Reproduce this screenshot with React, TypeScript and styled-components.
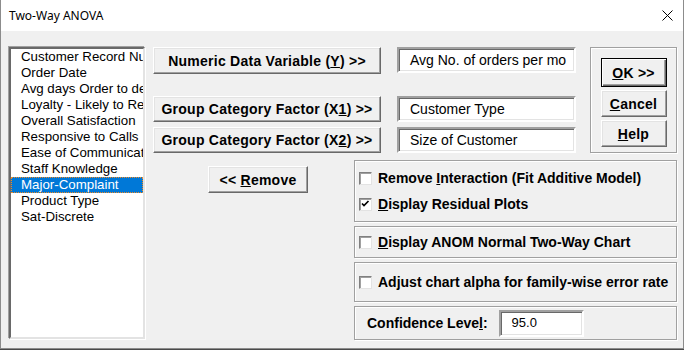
import React from "react";
import styled, {createGlobalStyle} from "styled-components";

//=============== GLOBAL ==================
const GlobalStyle = createGlobalStyle`
  html, body {
    margin: 0;
    padding: 0;
    background: #4a4a4a;
  }
  body {
    width: 684px;
    height: 350px;
    overflow: hidden;
    font-family: "Liberation Sans", Arial, sans-serif;
  }
  * { box-sizing: border-box; }
`;

//=============== STYLED ==================
const Window = styled.div`
  width: 684px;
  height: 349px;
  background: #f0f0f0;
  border: 1px solid #8c8c8c;
  border-top: none;
  display: flex;
  flex-direction: column;
`;

const TitleBar = styled.div`
  height: 31px;
  background: #fff;
  display: flex;
  align-items: center;
  justify-content: space-between;
  padding: 0 10px 0 8px;
  font-family: "Noto Sans", "Liberation Sans", sans-serif;
  font-size: 12px;
  color: #000;
`;

const Body = styled.div`
  display: flex;
  padding: 16px 6px 0 8px;
`;

const ListBox = styled.div`
  width: 136px;
  height: 292px;
  background: #fff;
  border: 2px solid;
  border-color: #696969 #e3e3e3 #e3e3e3 #696969;
  box-shadow: -1px -1px 0 #a0a0a0, 1px 1px 0 #fff;
  overflow: hidden;
  font-size: 13.3px;
`;

const ListItem = styled.div<{ $selected?: boolean }>`
  height: 16px;
  line-height: 16px;
  padding-left: 10px;
  white-space: nowrap;
  overflow: hidden;
  color: ${p => (p.$selected ? "#fff" : "#000")};
  background: ${p => (p.$selected ? "#0078d7" : "transparent")};
  outline: ${p => (p.$selected ? "1px dotted #f08a24" : "none")};
  outline-offset: -1px;
`;

const RightArea = styled.div`
  margin-left: 8px;
  display: flex;
  flex-direction: column;
`;

const TopRow = styled.div`
  display: flex;
  align-items: flex-start;
`;

const FieldsCol = styled.div`
  width: 423px;
  display: flex;
  flex-direction: column;
`;

const FieldRow = styled.div<{ $top: number }>`
  display: flex;
  gap: 16px;
  margin-top: ${p => p.$top}px;
`;

const Button = styled.div<{ $w: number; $h: number; $default?: boolean }>`
  width: ${p => p.$w}px;
  height: ${p => p.$h}px;
  display: flex;
  align-items: center;
  justify-content: center;
  background: #f0f0f0;
  border: 1px solid;
  border-color: ${p => (p.$default ? "#000" : "#fff #696969 #696969 #fff")};
  box-shadow: ${p =>
    p.$default
      ? "inset 1px 1px 0 #fff, inset -1px -1px 0 #696969, inset -2px -2px 0 #a0a0a0"
      : "inset -1px -1px 0 #a0a0a0, inset 1px 1px 0 #e3e3e3"};
  font-weight: bold;
  font-size: 14px;
  letter-spacing: 0.25px;
  color: #000;
  white-space: pre;
`;

const FieldBox = styled.div`
  width: 179px;
  height: 26px;
  background: #fff;
  border: 2px solid;
  border-color: #a0a0a0 #fff #fff #a0a0a0;
  box-shadow: inset 1px 1px 0 #696969, inset -1px -1px 0 #e3e3e3;
  display: flex;
  align-items: center;
  padding-left: 11px;
  font-size: 14px;
  white-space: nowrap;
  overflow: hidden;
`;

const CommandGroup = styled.div`
  margin-left: 14px;
  width: 87px;
  height: 106px;
  border: 1px solid #a0a0a0;
  box-shadow: inset 1px 1px 0 #fff, 1px 1px 0 #fff;
  display: flex;
  flex-direction: column;
  align-items: center;
  padding-top: 10px;
  gap: 3px;
`;

const BottomRow = styled.div`
  display: flex;
  margin-top: 7px;
`;

const RemoveCol = styled.div`
  width: 201px;
  padding: 6px 0 0 55px;
`;

const OptionsCol = styled.div`
  width: 323px;
  display: flex;
  flex-direction: column;
  gap: 4px;
`;

const OptionGroup = styled.div<{ $h: number }>`
  height: ${p => p.$h}px;
  border: 1px solid #a0a0a0;
  box-shadow: inset 1px 1px 0 #fff, 1px 1px 0 #fff;
  display: flex;
  flex-direction: column;
  justify-content: center;
  gap: 10px;
  padding-left: 4px;
`;

const CheckRow = styled.div`
  display: flex;
  align-items: center;
  gap: 6px;
  font-weight: bold;
  font-size: 14px;
  white-space: pre;
`;

const CheckBox = styled.span`
  width: 13px;
  height: 13px;
  background: #fff;
  border: 1px solid;
  border-color: #808080 #e3e3e3 #e3e3e3 #808080;
  box-shadow: inset 1px 1px 0 #a0a0a0;
  display: inline-flex;
`;

const ConfRow = styled.div`
  height: 34px;
  border: 1px solid #a0a0a0;
  box-shadow: inset 1px 1px 0 #fff, 1px 1px 0 #fff;
  display: flex;
  align-items: center;
  padding-left: 12px;
  font-weight: bold;
  font-size: 14px;
`;

const ConfInput = styled.div`
  margin-left: 11px;
  width: 85px;
  height: 27px;
  background: #fff;
  border: 2px solid;
  border-color: #a0a0a0 #fff #fff #a0a0a0;
  box-shadow: inset 1px 1px 0 #696969, inset -1px -1px 0 #e3e3e3;
  padding: 3px 0 0 11px;
  font-weight: normal;
  font-size: 13px;
`;

const U = styled.span`
  text-decoration: underline;
`;

//=============== DATA ====================
const variables = [
    "Customer Record Number",
    "Order Date",
    "Avg days Order to delivery",
    "Loyalty - Likely to Recommend",
    "Overall Satisfaction",
    "Responsive to Calls",
    "Ease of Communication",
    "Staff Knowledge",
    "Major-Complaint",
    "Product Type",
    "Sat-Discrete",
];

//============== COMPONENTS =================
const Check: React.FC<{ checked?: boolean }> = ({checked}) => (
    <CheckBox>
        {checked && (
            <svg width="11" height="11" viewBox="0 0 11 11">
                <path d="M2 4.5 L4 6.5 L8.5 2" fill="none" stroke="#000" strokeWidth="1.7"/>
            </svg>
        )}
    </CheckBox>
);

const App: React.FC = () => {
    return (
        <>
            <GlobalStyle/>
            <Window>
                <TitleBar>
                    <span>Two-Way ANOVA</span>
                    <svg width="11" height="11" viewBox="0 0 11 11">
                        <path d="M0.5 0.5 L10.5 10.5 M10.5 0.5 L0.5 10.5" stroke="#000" strokeWidth="1"/>
                    </svg>
                </TitleBar>
                <Body>
                    <ListBox>
                        {variables.map(v => (
                            <ListItem key={v} $selected={v === "Major-Complaint"}>{v}</ListItem>
                        ))}
                    </ListBox>
                    <RightArea>
                        <TopRow>
                            <FieldsCol>
                                <FieldRow $top={0}>
                                    <Button $w={228} $h={27}><span>Numeric Data Variable (<U>Y</U>) &gt;&gt;</span></Button>
                                    <FieldBox>Avg No. of orders per mo</FieldBox>
                                </FieldRow>
                                <FieldRow $top={22}>
                                    <Button $w={228} $h={26}><span>Group Category Factor (X<U>1</U>) &gt;&gt;</span></Button>
                                    <FieldBox>Customer Type</FieldBox>
                                </FieldRow>
                                <FieldRow $top={5}>
                                    <Button $w={228} $h={26}><span>Group Category Factor (X<U>2</U>) &gt;&gt;</span></Button>
                                    <FieldBox>Size of Customer</FieldBox>
                                </FieldRow>
                            </FieldsCol>
                            <CommandGroup>
                                <Button $w={66} $h={29} $default><span><U>O</U>K &gt;&gt;</span></Button>
                                <Button $w={66} $h={27}><span><U>C</U>ancel</span></Button>
                                <Button $w={66} $h={27}><span><U>H</U>elp</span></Button>
                            </CommandGroup>
                        </TopRow>
                        <BottomRow>
                            <RemoveCol>
                                <Button $w={100} $h={27}><span>&lt;&lt; <U>R</U>emove</span></Button>
                            </RemoveCol>
                            <OptionsCol>
                                <OptionGroup $h={62}>
                                    <CheckRow><Check/><span>Remove <U>I</U>nteraction (Fit Additive Model)</span></CheckRow>
                                    <CheckRow><Check checked/><span><U>D</U>isplay Residual Plots</span></CheckRow>
                                </OptionGroup>
                                <OptionGroup $h={32}>
                                    <CheckRow><Check/><span><U>D</U>isplay ANOM Normal Two-Way Chart</span></CheckRow>
                                </OptionGroup>
                                <OptionGroup $h={40}>
                                    <CheckRow><Check/><span>Adjust chart alpha for family-wise error rate</span></CheckRow>
                                </OptionGroup>
                                <ConfRow>
                                    <span>Confidence Leve<U>l</U>:</span>
                                    <ConfInput>95.0</ConfInput>
                                </ConfRow>
                            </OptionsCol>
                        </BottomRow>
                    </RightArea>
                </Body>
            </Window>
        </>
    );
};

export default App;
